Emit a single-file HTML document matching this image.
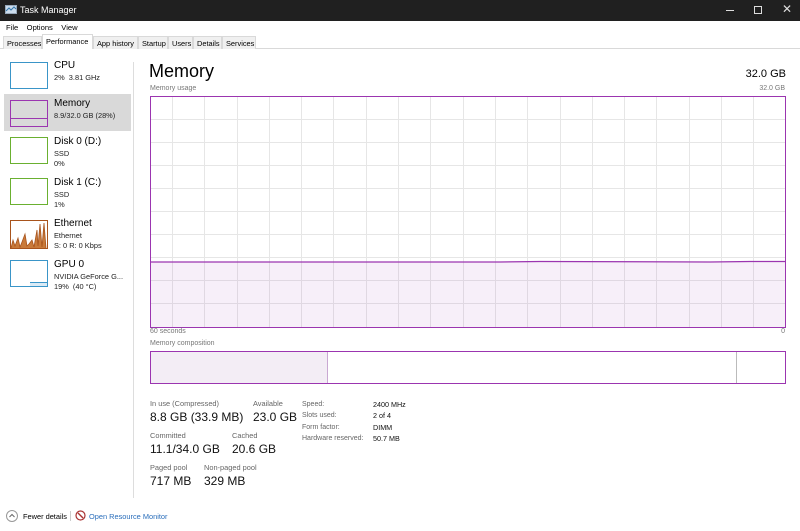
<!DOCTYPE html>
<html><head><style>
*{margin:0;padding:0;box-sizing:border-box}
body{width:800px;height:531px;overflow:hidden;background:#fff;font-family:"Liberation Sans",sans-serif;color:#000;position:relative}
.a{position:absolute;white-space:nowrap}
.s{font-size:7px;color:#777}
.lbl{font-size:7.4px;color:#666}
.val{font-size:12px;color:#111}
.tab{position:absolute;top:36px;height:13px;font-size:7.4px;padding:2px 0 0 3px;border:1px solid #d9d9d9;border-bottom:none;background:#f0f0f0;white-space:nowrap;overflow:hidden}
.th{position:absolute;left:10px;width:38px;height:27px;border:1px solid}
.nm{font-size:10px}
.sb{font-size:7.4px;color:#222}
</style></head><body>
<div class="a" style="left:0;top:0;width:800px;height:21px;background:#202020"></div>
<svg class="a" style="left:5px;top:5px" width="12" height="11"><rect x="0.5" y="0.5" width="11" height="8" fill="#cde" stroke="#9ab"/><polyline points="1,6 4,3 6,5 9,2 11,4" fill="none" stroke="#37a"/></svg>
<div class="a" style="left:20px;top:5px;font-size:9px;color:#fff">Task Manager</div>
<div class="a" style="left:726px;top:10px;width:8px;height:1px;background:#ddd"></div>
<div class="a" style="left:754px;top:6px;width:8px;height:8px;border:1px solid #ddd"></div>
<div class="a" style="left:782px;top:2px;font-size:12px;color:#ddd">✕</div>
<div class="a" style="left:6px;top:23px;font-size:7.6px">File&nbsp;&nbsp;&nbsp;&nbsp;Options&nbsp;&nbsp;&nbsp;&nbsp;View</div>
<div class="a" style="left:0;top:48px;width:800px;height:1px;background:#d9d9d9"></div>
<div class="tab" style="left:3px;width:39px">Processes</div>
<div class="tab" style="left:42px;width:51px;top:34px;height:15px;background:#fff">Performance</div>
<div class="tab" style="left:93px;width:45px">App history</div>
<div class="tab" style="left:138px;width:30px">Startup</div>
<div class="tab" style="left:168px;width:25px">Users</div>
<div class="tab" style="left:193px;width:29px">Details</div>
<div class="tab" style="left:222px;width:34px">Services</div>
<div class="a" style="left:133px;top:62px;width:1px;height:436px;background:#ddd"></div>
<div class="a" style="left:4px;top:94px;width:127px;height:37px;background:#d9d9d9"></div>
<div class="th" style="top:62px;border-color:#3a95c8"></div>
<div class="a nm" style="left:54px;top:60px">CPU</div><div class="a sb" style="left:54px;top:73px">2%&nbsp; 3.81 GHz</div>
<div class="th" style="top:100px;border-color:#9b35b0"></div>
<div class="a" style="left:11px;top:118px;width:36px;height:1px;background:#9b35b0"></div>
<div class="a nm" style="left:54px;top:98px">Memory</div><div class="a sb" style="left:54px;top:111px">8.9/32.0 GB (28%)</div>
<div class="th" style="top:137px;border-color:#6ab030"></div>
<div class="a nm" style="left:54px;top:136px">Disk 0 (D:)</div><div class="a sb" style="left:54px;top:149px">SSD</div><div class="a sb" style="left:54px;top:159px">0%</div>
<div class="th" style="top:178px;border-color:#6ab030"></div>
<div class="a nm" style="left:54px;top:177px">Disk 1 (C:)</div><div class="a sb" style="left:54px;top:190px">SSD</div><div class="a sb" style="left:54px;top:200px">1%</div>
<svg class="a" style="left:10px;top:220px" width="38" height="29"><rect x="0.5" y="0.5" width="37" height="28" fill="#fff" stroke="#a8531c"/><polyline points="1,28 3,20 5,26 8,18 10,27 12,22 15,14 17,26 19,24 22,20 24,27 27,10 28,26 30,4 32,27 34,3 36,28" fill="#c97a3a" stroke="#a8531c" stroke-width="0.8"/></svg>
<div class="a nm" style="left:54px;top:218px">Ethernet</div><div class="a sb" style="left:54px;top:231px">Ethernet</div><div class="a sb" style="left:54px;top:241px">S: 0 R: 0 Kbps</div>
<div class="th" style="top:260px;border-color:#3a95c8"></div>
<div class="a" style="left:30px;top:282px;width:17px;height:4px;background:#dbeaf5;border-top:1px solid #3a95c8"></div>
<div class="a nm" style="left:54px;top:259px">GPU 0</div><div class="a sb" style="left:54px;top:272px">NVIDIA GeForce G...</div><div class="a sb" style="left:54px;top:282px">19%&nbsp; (40 °C)</div>
<div class="a" style="left:149px;top:61px;font-size:18px">Memory</div>
<div class="a" style="right:14px;top:68px;font-size:11px">32.0 GB</div>
<div class="a s" style="left:150px;top:85px">Memory usage</div>
<div class="a s" style="right:15px;top:85px">32.0 GB</div>
<svg class="a" style="left:150px;top:96px" width="636" height="232">
<g stroke="#e6e6e6" stroke-width="1">
<line x1="0" y1="23.5" x2="636" y2="23.5"/><line x1="0" y1="46.5" x2="636" y2="46.5"/><line x1="0" y1="69.5" x2="636" y2="69.5"/><line x1="0" y1="92.5" x2="636" y2="92.5"/><line x1="0" y1="115.5" x2="636" y2="115.5"/><line x1="0" y1="138.5" x2="636" y2="138.5"/><line x1="0" y1="161.5" x2="636" y2="161.5"/><line x1="0" y1="184.5" x2="636" y2="184.5"/><line x1="0" y1="207.5" x2="636" y2="207.5"/>
<line x1="22.5" y1="0" x2="22.5" y2="232"/><line x1="54.5" y1="0" x2="54.5" y2="232"/><line x1="87.5" y1="0" x2="87.5" y2="232"/><line x1="119.5" y1="0" x2="119.5" y2="232"/><line x1="151.5" y1="0" x2="151.5" y2="232"/><line x1="183.5" y1="0" x2="183.5" y2="232"/><line x1="216.5" y1="0" x2="216.5" y2="232"/><line x1="248.5" y1="0" x2="248.5" y2="232"/><line x1="280.5" y1="0" x2="280.5" y2="232"/><line x1="313.5" y1="0" x2="313.5" y2="232"/><line x1="345.5" y1="0" x2="345.5" y2="232"/><line x1="377.5" y1="0" x2="377.5" y2="232"/><line x1="410.5" y1="0" x2="410.5" y2="232"/><line x1="442.5" y1="0" x2="442.5" y2="232"/><line x1="474.5" y1="0" x2="474.5" y2="232"/><line x1="506.5" y1="0" x2="506.5" y2="232"/><line x1="539.5" y1="0" x2="539.5" y2="232"/><line x1="571.5" y1="0" x2="571.5" y2="232"/><line x1="603.5" y1="0" x2="603.5" y2="232"/>
</g>
<rect x="1" y="166" width="634" height="65" fill="#9b35b0" fill-opacity="0.08"/>
<polyline points="1,166 350,166 390,165.5 560,166 600,165.5 635,165.5" fill="none" stroke="#9b35b0" stroke-width="1.2"/>
<rect x="0.5" y="0.5" width="635" height="231" fill="none" stroke="#9b35b0"/>
</svg>
<div class="a s" style="left:150px;top:328px">60 seconds</div>
<div class="a s" style="right:15px;top:328px">0</div>
<div class="a s" style="left:150px;top:340px">Memory composition</div>
<svg class="a" style="left:150px;top:351px" width="636" height="33">
<rect x="1" y="1" width="176" height="31" fill="#f3edf5"/>
<line x1="177.5" y1="1" x2="177.5" y2="32" stroke="#c9a8d2"/>
<line x1="586.5" y1="1" x2="586.5" y2="32" stroke="#bbb"/>
<rect x="0.5" y="0.5" width="635" height="32" fill="none" stroke="#9b35b0"/>
</svg>
<div class="a lbl" style="left:150px;top:399px">In use (Compressed)</div>
<div class="a val" style="left:150px;top:410px">8.8 GB (33.9 MB)</div>
<div class="a lbl" style="left:253px;top:399px">Available</div>
<div class="a val" style="left:253px;top:410px">23.0 GB</div>
<div class="a lbl" style="left:150px;top:431px">Committed</div>
<div class="a val" style="left:150px;top:442px">11.1/34.0 GB</div>
<div class="a lbl" style="left:232px;top:431px">Cached</div>
<div class="a val" style="left:232px;top:442px">20.6 GB</div>
<div class="a lbl" style="left:150px;top:463px">Paged pool</div>
<div class="a val" style="left:150px;top:474px">717 MB</div>
<div class="a lbl" style="left:204px;top:463px">Non-paged pool</div>
<div class="a val" style="left:204px;top:474px">329 MB</div>
<div class="a lbl" style="left:302px;top:399px;line-height:11.3px;font-size:7px">Speed:<br>Slots used:<br>Form factor:<br>Hardware reserved:</div>
<div class="a" style="left:373px;top:399px;font-size:7.2px;line-height:11.3px;color:#111">2400 MHz<br>2 of 4<br>DIMM<br>50.7 MB</div>
<div class="a" style="left:6px;top:510px;width:12px;height:12px;border:1px solid #999;border-radius:50%"></div>
<svg class="a" style="left:8px;top:512px" width="8" height="8"><polyline points="1.5,5 4,2.5 6.5,5" fill="none" stroke="#666"/></svg>
<div class="a" style="left:23px;top:512px;font-size:7.4px">Fewer details</div>
<div class="a" style="left:70px;top:511px;width:1px;height:10px;background:#ccc"></div>
<svg class="a" style="left:75px;top:510px" width="11" height="11"><circle cx="5.5" cy="5.5" r="4.5" fill="#fff" stroke="#a33" stroke-width="1.2"/><line x1="3" y1="3" x2="8" y2="8" stroke="#a33" stroke-width="1.4"/></svg>
<div class="a" style="left:89px;top:512px;font-size:7.4px;color:#2a6ebb">Open Resource Monitor</div>
</body></html>
